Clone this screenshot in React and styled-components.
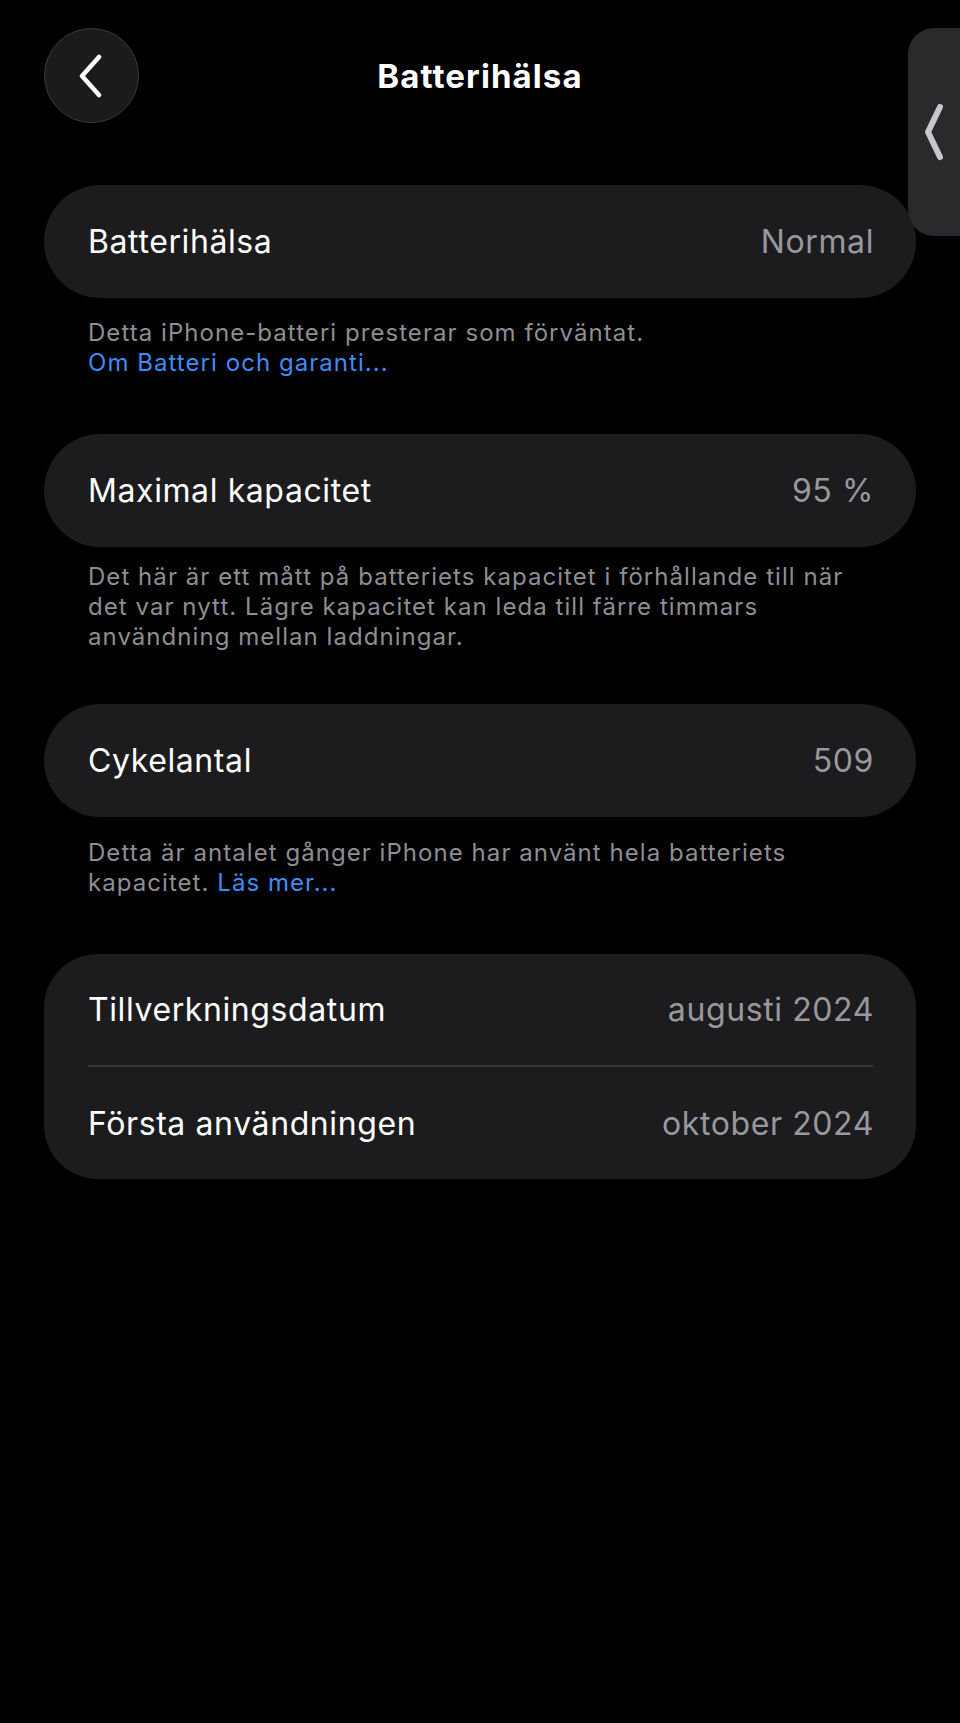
import React from "react";
import styled, { createGlobalStyle } from "styled-components";

const GlobalStyle = createGlobalStyle`
  html, body {
    margin: 0;
    padding: 0;
    background: #000;
  }
  body {
    font-family: Inter, "Noto Sans", "Liberation Sans", sans-serif;
    -webkit-font-smoothing: antialiased;
  }
`;

const Screen = styled.div`
  position: relative;
  min-height: 1723px;
  background: #000;
  padding: 28px 44px 0;
  box-sizing: border-box;
  overflow: hidden;
`;

const Header = styled.header`
  display: grid;
  grid-template-columns: 95px 1fr 95px;
  align-items: center;
  height: 95px;
  margin-bottom: 62px;
`;

const BackButton = styled.button`
  width: 95px;
  height: 95px;
  border-radius: 50%;
  background: #1b1b1d;
  border: 1.5px solid #3a3a3c;
  padding: 0;
  display: flex;
  align-items: center;
  justify-content: center;
  box-sizing: border-box;
  cursor: pointer;
`;

const Title = styled.h1`
  margin: 0;
  text-align: center;
  color: #fff;
  font-size: 33px;
  font-weight: 700;
  letter-spacing: 1.1px;
`;

const SideTab = styled.div`
  position: absolute;
  top: 28px;
  right: 0;
  width: 52px;
  height: 208px;
  background: #2a2a2c;
  border-radius: 26px 0 0 26px;
  display: flex;
  align-items: center;
  padding-left: 15px;
  box-sizing: border-box;
`;

const Card = styled.div`
  background: #1c1c1e;
  border-radius: ${(p) => p.$radius || 57}px;
  padding: 0 42px 0 44px;
  display: flex;
  flex-direction: column;
`;

const Row = styled.div`
  display: flex;
  align-items: center;
  justify-content: space-between;
  height: ${(p) => p.$h || 113}px;
  font-size: 32px;
  letter-spacing: 0.6px;
`;

const Label = styled.span`
  color: #fff;
`;

const Value = styled.span`
  color: #98989e;
`;

const Divider = styled.div`
  height: 2px;
  margin-right: 1px;
  background: #38383a;
`;

const Footer = styled.p`
  margin: ${(p) => p.$top ?? 20}px 0 ${(p) => p.$bottom ?? 56}px;
  padding: 0 44px;
  color: #8e8e93;
  font-size: 24px;
  line-height: 30px;
  letter-spacing: 1.05px;
`;

const Link = styled.a`
  color: #3f8cf6;
  text-decoration: none;
`;

const Chevron = ({ w, h, stroke, color, points }) => (
  <svg width={w} height={h} viewBox={`0 0 ${w} ${h}`} fill="none">
    <polyline
      points={points}
      stroke={color}
      strokeWidth={stroke}
      strokeLinecap="round"
      strokeLinejoin="round"
    />
  </svg>
);

export default function App() {
  return (
    <>
      <GlobalStyle />
      <Screen>
        <Header>
          <BackButton aria-label="Tillbaka">
            <Chevron w={30} h={44} stroke={4.5} color="#fff" points="22,3 5,22 22,41" />
          </BackButton>
          <Title>Batterihälsa</Title>
          <span />
        </Header>

        <SideTab>
          <Chevron w={24} h={60} stroke={6} color="#c7c7cc" points="17,5 5,30 17,55" />
        </SideTab>

        <Card>
          <Row>
            <Label>Batterihälsa</Label>
            <Value>Normal</Value>
          </Row>
        </Card>
        <Footer>
          Detta iPhone-batteri presterar som förväntat.
          <br />
          <Link href="#">Om Batteri och garanti...</Link>
        </Footer>

        <Card>
          <Row>
            <Label>Maximal kapacitet</Label>
            <Value>95 %</Value>
          </Row>
        </Card>
        <Footer $top={15} $bottom={52}>
          Det här är ett mått på batteriets kapacitet i förhållande till när
          <br />
          det var nytt. Lägre kapacitet kan leda till färre timmars
          <br />
          användning mellan laddningar.
        </Footer>

        <Card>
          <Row>
            <Label>Cykelantal</Label>
            <Value>509</Value>
          </Row>
        </Card>
        <Footer $top={21}>
          Detta är antalet gånger iPhone har använt hela batteriets
          <br />
          kapacitet. <Link href="#">Läs mer...</Link>
        </Footer>

        <Card $radius={54}>
          <Row $h={111}>
            <Label>Tillverkningsdatum</Label>
            <Value>augusti 2024</Value>
          </Row>
          <Divider />
          <Row $h={112}>
            <Label>Första användningen</Label>
            <Value>oktober 2024</Value>
          </Row>
        </Card>
      </Screen>
    </>
  );
}
